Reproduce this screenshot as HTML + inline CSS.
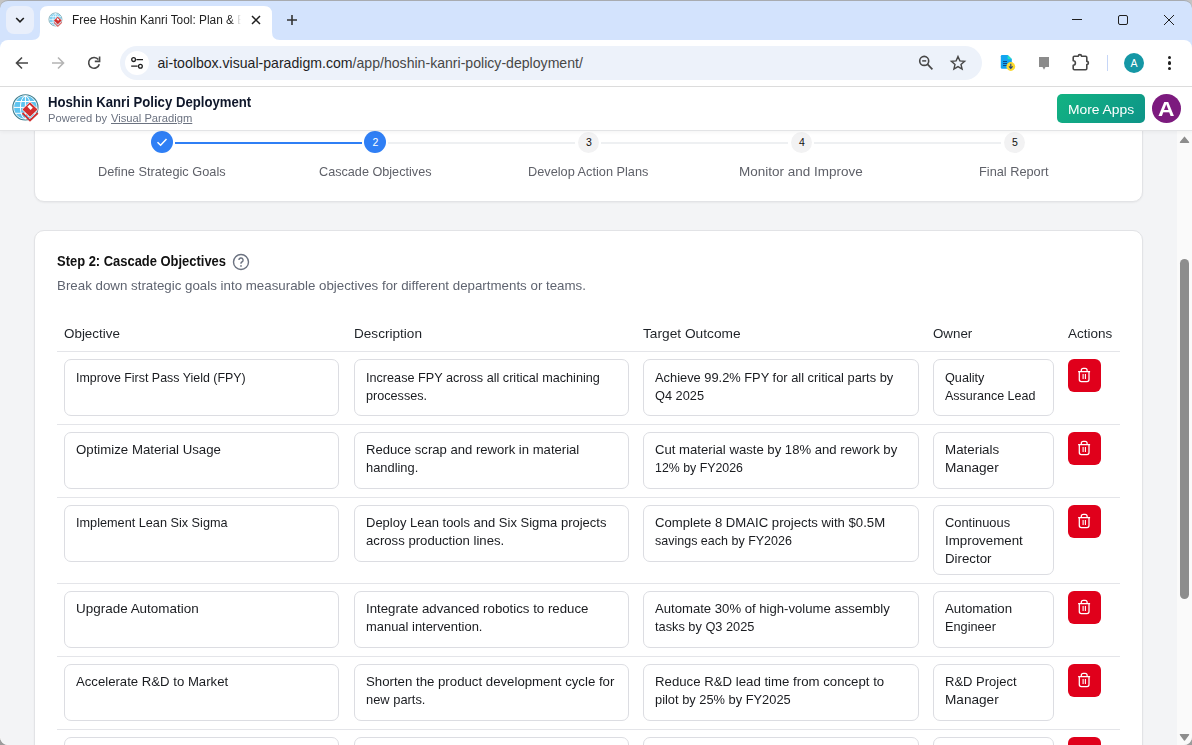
<!DOCTYPE html>
<html><head><meta charset="utf-8">
<style>
*{box-sizing:border-box;margin:0;padding:0}
html,body{width:1192px;height:745px;overflow:hidden;background:#c4c4c4;font-family:"Liberation Sans",sans-serif}
.a{position:absolute}
.t{position:absolute;white-space:pre;line-height:1}
svg{position:absolute;overflow:visible}
</style></head><body>
<div class="a" style="left:0px;top:87px;width:1177px;height:658px;background:#f3f4f6"></div>
<div class="a" style="left:34px;top:60px;width:1109px;height:142px;background:#fff;border:1px solid #e2e3e6;border-radius:10px;box-shadow:0 1px 2px rgba(0,0,0,.05)"></div>
<div class="a" style="left:34px;top:230px;width:1109px;height:600px;background:#fff;border:1px solid #e2e3e6;border-radius:10px;box-shadow:0 1px 2px rgba(0,0,0,.05)"></div>
<div class="a" style="left:175px;top:142px;width:187px;height:2px;background:#2f7ff5"></div>
<div class="a" style="left:388px;top:142px;width:187px;height:2px;background:#eef0f2"></div>
<div class="a" style="left:601px;top:142px;width:187px;height:2px;background:#eef0f2"></div>
<div class="a" style="left:814px;top:142px;width:187px;height:2px;background:#eef0f2"></div>
<div class="a" style="left:151px;top:131px;width:22px;height:22px;background:#2f7ff5;border-radius:50%"></div>
<div class="t" style="left:98.20px;top:166px;font-size:12.75px;color:#5f6169;font-weight:400;transform:scaleX(1.0003);transform-origin:0 0;">Define Strategic Goals</div>
<div class="a" style="left:364px;top:131px;width:22px;height:22px;background:#2f7ff5;border-radius:50%"></div>
<div class="t" style="left:318.75px;top:166px;font-size:12.75px;color:#5f6169;font-weight:400;transform:scaleX(0.9921);transform-origin:0 0;">Cascade Objectives</div>
<div class="a" style="left:577.5px;top:132px;width:21px;height:21px;background:#f2f2f3;border-radius:50%"></div>
<div class="t" style="left:527.80px;top:166px;font-size:12.75px;color:#5f6169;font-weight:400;transform:scaleX(0.9992);transform-origin:0 0;">Develop Action Plans</div>
<div class="a" style="left:790.5px;top:132px;width:21px;height:21px;background:#f2f2f3;border-radius:50%"></div>
<div class="t" style="left:739.15px;top:166px;font-size:12.75px;color:#5f6169;font-weight:400;transform:scaleX(1.0578);transform-origin:0 0;">Monitor and Improve</div>
<div class="a" style="left:1003.5px;top:132px;width:21px;height:21px;background:#f2f2f3;border-radius:50%"></div>
<div class="t" style="left:979.25px;top:166px;font-size:12.75px;color:#5f6169;font-weight:400;transform:scaleX(1.0007);transform-origin:0 0;">Final Report</div>
<svg style="left:156px;top:136px" width="12" height="12" viewBox="0 0 12 12"><path d="M1.5 6.2 L4.6 9.2 L10.5 3" fill="none" stroke="#fff" stroke-width="1.5"/></svg>
<div class="t" style="left:372.38px;top:137px;font-size:10.5px;color:#fff;font-weight:400;">2</div>
<div class="t" style="left:585.88px;top:137px;font-size:10.5px;color:#111;font-weight:400;">3</div>
<div class="t" style="left:798.88px;top:137px;font-size:10.5px;color:#111;font-weight:400;">4</div>
<div class="t" style="left:1011.88px;top:137px;font-size:10.5px;color:#111;font-weight:400;">5</div>
<div class="t" style="left:57.00px;top:254px;font-size:14.0px;color:#111;font-weight:700;transform:scaleX(0.9242);transform-origin:0 0;">Step 2: Cascade Objectives</div>
<svg style="left:232px;top:253px" width="18" height="18" viewBox="0 0 18 18"><circle cx="9" cy="9" r="7.5" fill="none" stroke="#6b7280" stroke-width="1.4"/><path d="M6.9 7.1 a2.1 2.1 0 1 1 3 1.9 c-.6.3-.9.7-.9 1.3v.5" fill="none" stroke="#6b7280" stroke-width="1.4"/><circle cx="9" cy="12.9" r=".85" fill="#6b7280"/></svg>
<div class="t" style="left:57.00px;top:280px;font-size:12.75px;color:#5f6470;font-weight:400;transform:scaleX(1.0444);transform-origin:0 0;">Break down strategic goals into measurable objectives for different departments or teams.</div>
<div class="t" style="left:64.00px;top:327px;font-size:13.1px;color:#1f2328;font-weight:400;transform:scaleX(1.0241);transform-origin:0 0;">Objective</div>
<div class="t" style="left:354.00px;top:327px;font-size:13.1px;color:#1f2328;font-weight:400;transform:scaleX(1.0375);transform-origin:0 0;">Description</div>
<div class="t" style="left:643.00px;top:327px;font-size:13.1px;color:#1f2328;font-weight:400;transform:scaleX(1.0473);transform-origin:0 0;">Target Outcome</div>
<div class="t" style="left:933.00px;top:327px;font-size:13.1px;color:#1f2328;font-weight:400;transform:scaleX(1.0179);transform-origin:0 0;">Owner</div>
<div class="t" style="left:1068.00px;top:327px;font-size:13.1px;color:#1f2328;font-weight:400;transform:scaleX(1.0302);transform-origin:0 0;">Actions</div>
<div class="a" style="left:57px;top:351px;width:1063px;height:1px;background:#e4e5e9"></div>
<div class="a" style="left:64px;top:359px;width:275px;height:57px;background:#fff;border:1px solid #dcdde2;border-radius:7px"></div>
<div class="t" style="left:76.00px;top:372px;font-size:12.75px;color:#1a1c20;font-weight:400;transform:scaleX(0.9734);transform-origin:0 0;">Improve First Pass Yield (FPY)</div>
<div class="a" style="left:354px;top:359px;width:275px;height:57px;background:#fff;border:1px solid #dcdde2;border-radius:7px"></div>
<div class="t" style="left:366.00px;top:372px;font-size:12.75px;color:#1a1c20;font-weight:400;transform:scaleX(0.9919);transform-origin:0 0;">Increase FPY across all critical machining</div>
<div class="t" style="left:366.00px;top:390px;font-size:12.75px;color:#1a1c20;font-weight:400;transform:scaleX(0.9900);transform-origin:0 0;">processes.</div>
<div class="a" style="left:643px;top:359px;width:276px;height:57px;background:#fff;border:1px solid #dcdde2;border-radius:7px"></div>
<div class="t" style="left:655.00px;top:372px;font-size:12.75px;color:#1a1c20;font-weight:400;transform:scaleX(1.0076);transform-origin:0 0;">Achieve 99.2% FPY for all critical parts by</div>
<div class="t" style="left:655.00px;top:390px;font-size:12.75px;color:#1a1c20;font-weight:400;transform:scaleX(1.0021);transform-origin:0 0;">Q4 2025</div>
<div class="a" style="left:933px;top:359px;width:121px;height:57px;background:#fff;border:1px solid #dcdde2;border-radius:7px"></div>
<div class="t" style="left:945.00px;top:372px;font-size:12.75px;color:#1a1c20;font-weight:400;transform:scaleX(0.9925);transform-origin:0 0;">Quality</div>
<div class="t" style="left:945.00px;top:390px;font-size:12.75px;color:#1a1c20;font-weight:400;transform:scaleX(0.9815);transform-origin:0 0;">Assurance Lead</div>
<div class="a" style="left:1068px;top:359px;width:33px;height:33px;background:#e0001b;border-radius:6px"></div>
<svg style="left:1077px;top:367px" width="15" height="16" viewBox="0 0 15 16"><path d="M1.1 4.6 H13.1 M4.3 4.4 V3.2 Q4.3 1.3 6.3 1.3 H8.1 Q10.1 1.3 10.1 3.2 V4.4 M2.3 4.8 V12.6 Q2.3 14.6 4.3 14.6 H10 Q12 14.6 12 12.6 V4.8" fill="none" stroke="#fff" stroke-width="1.25"/><path d="M6.1 7 V11.9 M8.4 7 V11.9" stroke="#fff" stroke-width="1.1"/></svg>
<div class="a" style="left:64px;top:432px;width:275px;height:57px;background:#fff;border:1px solid #dcdde2;border-radius:7px"></div>
<div class="t" style="left:76.00px;top:444px;font-size:12.75px;color:#1a1c20;font-weight:400;transform:scaleX(1.0381);transform-origin:0 0;">Optimize Material Usage</div>
<div class="a" style="left:354px;top:432px;width:275px;height:57px;background:#fff;border:1px solid #dcdde2;border-radius:7px"></div>
<div class="t" style="left:366.00px;top:444px;font-size:12.75px;color:#1a1c20;font-weight:400;transform:scaleX(1.0272);transform-origin:0 0;">Reduce scrap and rework in material</div>
<div class="t" style="left:366.00px;top:462px;font-size:12.75px;color:#1a1c20;font-weight:400;transform:scaleX(1.0100);transform-origin:0 0;">handling.</div>
<div class="a" style="left:643px;top:432px;width:276px;height:57px;background:#fff;border:1px solid #dcdde2;border-radius:7px"></div>
<div class="t" style="left:655.00px;top:444px;font-size:12.75px;color:#1a1c20;font-weight:400;transform:scaleX(1.0295);transform-origin:0 0;">Cut material waste by 18% and rework by</div>
<div class="t" style="left:655.00px;top:462px;font-size:12.75px;color:#1a1c20;font-weight:400;transform:scaleX(0.9697);transform-origin:0 0;">12% by FY2026</div>
<div class="a" style="left:933px;top:432px;width:121px;height:57px;background:#fff;border:1px solid #dcdde2;border-radius:7px"></div>
<div class="t" style="left:945.00px;top:444px;font-size:12.75px;color:#1a1c20;font-weight:400;transform:scaleX(1.0480);transform-origin:0 0;">Materials</div>
<div class="t" style="left:945.00px;top:462px;font-size:12.75px;color:#1a1c20;font-weight:400;transform:scaleX(1.0673);transform-origin:0 0;">Manager</div>
<div class="a" style="left:1068px;top:432px;width:33px;height:33px;background:#e0001b;border-radius:6px"></div>
<svg style="left:1077px;top:440px" width="15" height="16" viewBox="0 0 15 16"><path d="M1.1 4.6 H13.1 M4.3 4.4 V3.2 Q4.3 1.3 6.3 1.3 H8.1 Q10.1 1.3 10.1 3.2 V4.4 M2.3 4.8 V12.6 Q2.3 14.6 4.3 14.6 H10 Q12 14.6 12 12.6 V4.8" fill="none" stroke="#fff" stroke-width="1.25"/><path d="M6.1 7 V11.9 M8.4 7 V11.9" stroke="#fff" stroke-width="1.1"/></svg>
<div class="a" style="left:64px;top:505px;width:275px;height:57px;background:#fff;border:1px solid #dcdde2;border-radius:7px"></div>
<div class="t" style="left:76.00px;top:517px;font-size:12.75px;color:#1a1c20;font-weight:400;transform:scaleX(0.9947);transform-origin:0 0;">Implement Lean Six Sigma</div>
<div class="a" style="left:354px;top:505px;width:275px;height:57px;background:#fff;border:1px solid #dcdde2;border-radius:7px"></div>
<div class="t" style="left:366.00px;top:517px;font-size:12.75px;color:#1a1c20;font-weight:400;transform:scaleX(1.0187);transform-origin:0 0;">Deploy Lean tools and Six Sigma projects</div>
<div class="t" style="left:366.00px;top:535px;font-size:12.75px;color:#1a1c20;font-weight:400;transform:scaleX(1.0316);transform-origin:0 0;">across production lines.</div>
<div class="a" style="left:643px;top:505px;width:276px;height:57px;background:#fff;border:1px solid #dcdde2;border-radius:7px"></div>
<div class="t" style="left:655.00px;top:517px;font-size:12.75px;color:#1a1c20;font-weight:400;transform:scaleX(1.0308);transform-origin:0 0;">Complete 8 DMAIC projects with $0.5M</div>
<div class="t" style="left:655.00px;top:535px;font-size:12.75px;color:#1a1c20;font-weight:400;transform:scaleX(0.9806);transform-origin:0 0;">savings each by FY2026</div>
<div class="a" style="left:933px;top:505px;width:121px;height:70px;background:#fff;border:1px solid #dcdde2;border-radius:7px"></div>
<div class="t" style="left:945.00px;top:517px;font-size:12.75px;color:#1a1c20;font-weight:400;transform:scaleX(1.0095);transform-origin:0 0;">Continuous</div>
<div class="t" style="left:945.00px;top:535px;font-size:12.75px;color:#1a1c20;font-weight:400;transform:scaleX(1.0452);transform-origin:0 0;">Improvement</div>
<div class="t" style="left:945.00px;top:553px;font-size:12.75px;color:#1a1c20;font-weight:400;transform:scaleX(1.0409);transform-origin:0 0;">Director</div>
<div class="a" style="left:1068px;top:505px;width:33px;height:33px;background:#e0001b;border-radius:6px"></div>
<svg style="left:1077px;top:513px" width="15" height="16" viewBox="0 0 15 16"><path d="M1.1 4.6 H13.1 M4.3 4.4 V3.2 Q4.3 1.3 6.3 1.3 H8.1 Q10.1 1.3 10.1 3.2 V4.4 M2.3 4.8 V12.6 Q2.3 14.6 4.3 14.6 H10 Q12 14.6 12 12.6 V4.8" fill="none" stroke="#fff" stroke-width="1.25"/><path d="M6.1 7 V11.9 M8.4 7 V11.9" stroke="#fff" stroke-width="1.1"/></svg>
<div class="a" style="left:64px;top:591px;width:275px;height:57px;background:#fff;border:1px solid #dcdde2;border-radius:7px"></div>
<div class="t" style="left:76.00px;top:603px;font-size:12.75px;color:#1a1c20;font-weight:400;transform:scaleX(1.0557);transform-origin:0 0;">Upgrade Automation</div>
<div class="a" style="left:354px;top:591px;width:275px;height:57px;background:#fff;border:1px solid #dcdde2;border-radius:7px"></div>
<div class="t" style="left:366.00px;top:603px;font-size:12.75px;color:#1a1c20;font-weight:400;transform:scaleX(1.0390);transform-origin:0 0;">Integrate advanced robotics to reduce</div>
<div class="t" style="left:366.00px;top:621px;font-size:12.75px;color:#1a1c20;font-weight:400;transform:scaleX(1.0142);transform-origin:0 0;">manual intervention.</div>
<div class="a" style="left:643px;top:591px;width:276px;height:57px;background:#fff;border:1px solid #dcdde2;border-radius:7px"></div>
<div class="t" style="left:655.00px;top:603px;font-size:12.75px;color:#1a1c20;font-weight:400;transform:scaleX(1.0289);transform-origin:0 0;">Automate 30% of high-volume assembly</div>
<div class="t" style="left:655.00px;top:621px;font-size:12.75px;color:#1a1c20;font-weight:400;transform:scaleX(1.0020);transform-origin:0 0;">tasks by Q3 2025</div>
<div class="a" style="left:933px;top:591px;width:121px;height:57px;background:#fff;border:1px solid #dcdde2;border-radius:7px"></div>
<div class="t" style="left:945.00px;top:603px;font-size:12.75px;color:#1a1c20;font-weight:400;transform:scaleX(1.0406);transform-origin:0 0;">Automation</div>
<div class="t" style="left:945.00px;top:621px;font-size:12.75px;color:#1a1c20;font-weight:400;transform:scaleX(0.9980);transform-origin:0 0;">Engineer</div>
<div class="a" style="left:1068px;top:591px;width:33px;height:33px;background:#e0001b;border-radius:6px"></div>
<svg style="left:1077px;top:599px" width="15" height="16" viewBox="0 0 15 16"><path d="M1.1 4.6 H13.1 M4.3 4.4 V3.2 Q4.3 1.3 6.3 1.3 H8.1 Q10.1 1.3 10.1 3.2 V4.4 M2.3 4.8 V12.6 Q2.3 14.6 4.3 14.6 H10 Q12 14.6 12 12.6 V4.8" fill="none" stroke="#fff" stroke-width="1.25"/><path d="M6.1 7 V11.9 M8.4 7 V11.9" stroke="#fff" stroke-width="1.1"/></svg>
<div class="a" style="left:64px;top:664px;width:275px;height:57px;background:#fff;border:1px solid #dcdde2;border-radius:7px"></div>
<div class="t" style="left:76.00px;top:676px;font-size:12.75px;color:#1a1c20;font-weight:400;transform:scaleX(1.0320);transform-origin:0 0;">Accelerate R&amp;D to Market</div>
<div class="a" style="left:354px;top:664px;width:275px;height:57px;background:#fff;border:1px solid #dcdde2;border-radius:7px"></div>
<div class="t" style="left:366.00px;top:676px;font-size:12.75px;color:#1a1c20;font-weight:400;transform:scaleX(1.0368);transform-origin:0 0;">Shorten the product development cycle for</div>
<div class="t" style="left:366.00px;top:694px;font-size:12.75px;color:#1a1c20;font-weight:400;transform:scaleX(1.0105);transform-origin:0 0;">new parts.</div>
<div class="a" style="left:643px;top:664px;width:276px;height:57px;background:#fff;border:1px solid #dcdde2;border-radius:7px"></div>
<div class="t" style="left:655.00px;top:676px;font-size:12.75px;color:#1a1c20;font-weight:400;transform:scaleX(1.0364);transform-origin:0 0;">Reduce R&amp;D lead time from concept to</div>
<div class="t" style="left:655.00px;top:694px;font-size:12.75px;color:#1a1c20;font-weight:400;transform:scaleX(1.0075);transform-origin:0 0;">pilot by 25% by FY2025</div>
<div class="a" style="left:933px;top:664px;width:121px;height:57px;background:#fff;border:1px solid #dcdde2;border-radius:7px"></div>
<div class="t" style="left:945.00px;top:676px;font-size:12.75px;color:#1a1c20;font-weight:400;transform:scaleX(1.0203);transform-origin:0 0;">R&amp;D Project</div>
<div class="t" style="left:945.00px;top:694px;font-size:12.75px;color:#1a1c20;font-weight:400;transform:scaleX(1.0673);transform-origin:0 0;">Manager</div>
<div class="a" style="left:1068px;top:664px;width:33px;height:33px;background:#e0001b;border-radius:6px"></div>
<svg style="left:1077px;top:672px" width="15" height="16" viewBox="0 0 15 16"><path d="M1.1 4.6 H13.1 M4.3 4.4 V3.2 Q4.3 1.3 6.3 1.3 H8.1 Q10.1 1.3 10.1 3.2 V4.4 M2.3 4.8 V12.6 Q2.3 14.6 4.3 14.6 H10 Q12 14.6 12 12.6 V4.8" fill="none" stroke="#fff" stroke-width="1.25"/><path d="M6.1 7 V11.9 M8.4 7 V11.9" stroke="#fff" stroke-width="1.1"/></svg>
<div class="a" style="left:64px;top:737px;width:275px;height:57px;background:#fff;border:1px solid #dcdde2;border-radius:7px"></div>
<div class="a" style="left:354px;top:737px;width:275px;height:57px;background:#fff;border:1px solid #dcdde2;border-radius:7px"></div>
<div class="a" style="left:643px;top:737px;width:276px;height:57px;background:#fff;border:1px solid #dcdde2;border-radius:7px"></div>
<div class="a" style="left:933px;top:737px;width:121px;height:57px;background:#fff;border:1px solid #dcdde2;border-radius:7px"></div>
<div class="a" style="left:1068px;top:737px;width:33px;height:33px;background:#e0001b;border-radius:6px"></div>
<svg style="left:1077px;top:745px" width="15" height="16" viewBox="0 0 15 16"><path d="M1.1 4.6 H13.1 M4.3 4.4 V3.2 Q4.3 1.3 6.3 1.3 H8.1 Q10.1 1.3 10.1 3.2 V4.4 M2.3 4.8 V12.6 Q2.3 14.6 4.3 14.6 H10 Q12 14.6 12 12.6 V4.8" fill="none" stroke="#fff" stroke-width="1.25"/><path d="M6.1 7 V11.9 M8.4 7 V11.9" stroke="#fff" stroke-width="1.1"/></svg>
<div class="a" style="left:57px;top:424px;width:1063px;height:1px;background:#e4e5e9"></div>
<div class="a" style="left:57px;top:497px;width:1063px;height:1px;background:#e4e5e9"></div>
<div class="a" style="left:57px;top:583px;width:1063px;height:1px;background:#e4e5e9"></div>
<div class="a" style="left:57px;top:656px;width:1063px;height:1px;background:#e4e5e9"></div>
<div class="a" style="left:57px;top:729px;width:1063px;height:1px;background:#e4e5e9"></div>
<div class="a" style="left:1177px;top:130px;width:15px;height:615px;background:#fafafa"></div>
<div class="a" style="left:1180px;top:259px;width:9px;height:340px;background:#8d8d8d;border-radius:5px"></div>
<svg style="left:1179px;top:135px" width="11" height="9" viewBox="0 0 11 9"><path d="M5.5 2.3 L9.6 7.3 H1.4 Z" fill="#8d8d8d" stroke="#8d8d8d" stroke-width="1.3" stroke-linejoin="round"/></svg>
<svg style="left:1179px;top:732px" width="11" height="9" viewBox="0 0 11 9"><path d="M1.4 2.6 H9.6 L5.5 8 Z" fill="#8d8d8d" stroke="#8d8d8d" stroke-width="1.3" stroke-linejoin="round"/></svg>
<div class="a" style="left:0px;top:87px;width:1192px;height:43px;background:#fff;box-shadow:0 1px 0 #e3e4e6,0 2px 4px rgba(0,0,0,.05)"></div>
<svg style="left:11px;top:93px" width="29" height="29" viewBox="0 0 29 29">
<circle cx="14.4" cy="14.4" r="12.6" fill="#fff" stroke="#3f7f8f" stroke-width="1.1"/>
<circle cx="14.4" cy="14.4" r="11.3" fill="#5ec4f0"/>
<g stroke="#fff" stroke-width="1" fill="none">
<ellipse cx="14.4" cy="14.4" rx="5" ry="11.3"/>
<path d="M14.4 3 V26 M3 14.4 H26 M4.5 8.5 H24.5 M4.5 20.3 H24.5"/>
</g>
<path d="M19 8.8 L27 16.5 L19 24.2 L11 16.5 Z" fill="#d32f2f" stroke="#fff" stroke-width="0.8"/>
<path d="M18.6 11.6 L21.8 14.8 L19.6 17 L16.4 13.8 Z" fill="#fff"/>
<path d="M11.5 20 L19 27.6 L26.8 20" fill="none" stroke="#d32f2f" stroke-width="1.8"/>
</svg>
<div class="t" style="left:48.00px;top:95px;font-size:14.0px;color:#0f172a;font-weight:700;transform:scaleX(0.9395);transform-origin:0 0;">Hoshin Kanri Policy Deployment</div>
<div class="t" style="left:48.00px;top:113px;font-size:11.1px;color:#6b7280;font-weight:400;transform:scaleX(1.0086);transform-origin:0 0;">Powered by</div>
<div class="t" style="left:111.00px;top:113px;font-size:11.1px;color:#6b7280;font-weight:400;transform:scaleX(1.0090);transform-origin:0 0;text-decoration:underline">Visual Paradigm</div>
<div class="a" style="left:1057px;top:94px;width:88px;height:29px;background:linear-gradient(135deg,#12b382,#0e9488);border-radius:5px"></div>
<div class="t" style="left:1067.50px;top:104px;font-size:12.75px;color:#fff;font-weight:400;transform:scaleX(1.0850);transform-origin:0 0;">More Apps</div>
<div class="a" style="left:1152px;top:94px;width:29px;height:29px;background:#7c1a7e;border-radius:50%"></div>
<div class="t" style="left:1157.95px;top:100px;font-size:19.5px;color:#fff;font-weight:700;transform:scaleX(1.1707);transform-origin:0 0;">A</div>
<div class="a" style="left:0;top:0;width:1192px;height:48px;background:#d3e3fd;border-radius:8px 8px 0 0;border-top:1px solid #a8abb0"></div>
<div class="a" style="left:6px;top:6px;width:28px;height:28px;background:#e9effb;border-radius:8px"></div>
<svg style="left:14px;top:15px" width="12" height="10" viewBox="0 0 12 10"><path d="M2.2 3 L6 6.8 L9.8 3" fill="none" stroke="#1f1f1f" stroke-width="1.6"/></svg>
<svg style="left:32px;top:6px" width="248" height="34" viewBox="0 0 248 34"><path d="M0 34 Q8 34 8 26 V8 Q8 0 16 0 H232 Q240 0 240 8 V26 Q240 34 248 34 Z" fill="#fff"/></svg>
<svg style="left:48px;top:12px" width="15" height="15" viewBox="0 0 29 29">
<circle cx="14.4" cy="14.4" r="12.6" fill="#fff" stroke="#5d97a6" stroke-width="1.4"/>
<circle cx="14.4" cy="14.4" r="11.3" fill="#7fd0f2"/>
<g stroke="#fff" stroke-width="1.2" fill="none">
<ellipse cx="14.4" cy="14.4" rx="5" ry="11.3"/>
<path d="M14.4 3 V26 M3 14.4 H26 M4.5 8.5 H24.5 M4.5 20.3 H24.5"/>
</g>
<path d="M19 8.8 L27 16.5 L19 24.2 L11 16.5 Z" fill="#d32f2f" stroke="#fff" stroke-width="0.8"/>
<path d="M18.6 11.6 L21.8 14.8 L19.6 17 L16.4 13.8 Z" fill="#fff"/>
<path d="M11.5 20 L19 27.6 L26.8 20" fill="none" stroke="#e06060" stroke-width="2"/>
</svg>
<div class="t" style="left:71.60px;top:14px;font-size:12.5px;color:#1f1f1f;font-weight:400;transform:scaleX(0.949);transform-origin:0 0;width:185px;overflow:hidden;-webkit-mask-image:linear-gradient(90deg,#000 167px,transparent 178px)">Free Hoshin Kanri Tool: Plan &amp; E</div>
<svg style="left:251px;top:15px" width="10" height="10" viewBox="0 0 10 10"><path d="M1 1 L9 9 M9 1 L1 9" stroke="#1f1f1f" stroke-width="1.5"/></svg>
<svg style="left:286px;top:14px" width="12" height="12" viewBox="0 0 12 12"><path d="M6 1 V11 M1 6 H11" stroke="#333" stroke-width="1.6"/></svg>
<div class="a" style="left:1072px;top:19px;width:10px;height:1px;background:#1f1f1f"></div>
<svg style="left:1117px;top:14px" width="12" height="12" viewBox="0 0 12 12"><rect x="1.5" y="1.5" width="9" height="9" rx="1.5" fill="none" stroke="#1f1f1f" stroke-width="1"/></svg>
<svg style="left:1163px;top:14px" width="12" height="12" viewBox="0 0 12 12"><path d="M1 1 L11 11 M11 1 L1 11" stroke="#1f1f1f" stroke-width="1"/></svg>
<div class="a" style="left:0;top:40px;width:1192px;height:46px;background:#fff;border-radius:8px 8px 0 0"></div>
<div class="a" style="left:0px;top:86px;width:1192px;height:1px;background:#dcdcdc"></div>
<svg style="left:14px;top:55px" width="16" height="16" viewBox="0 0 16 16"><path d="M14 8 H2.5 M8 2.5 L2.5 8 L8 13.5" fill="none" stroke="#474747" stroke-width="1.6"/></svg>
<svg style="left:50px;top:55px" width="16" height="16" viewBox="0 0 16 16"><path d="M2 8 H13.5 M8 2.5 L13.5 8 L8 13.5" fill="none" stroke="#b4b4b4" stroke-width="1.6"/></svg>
<svg style="left:86px;top:55px" width="16" height="16" viewBox="0 0 16 16"><path d="M12.4 4.6 A5.4 5.4 0 1 0 13.3 9.2" fill="none" stroke="#474747" stroke-width="1.6"/><path d="M8.8 6.4 H13.6 V1.6" fill="none" stroke="#474747" stroke-width="1.6"/></svg>
<div class="a" style="left:120px;top:46px;width:862px;height:34px;background:#edf2fa;border-radius:17px"></div>
<div class="a" style="left:125px;top:51px;width:24px;height:24px;background:#fff;border-radius:50%"></div>
<svg style="left:129px;top:55px" width="16" height="16" viewBox="0 0 16 16"><circle cx="4.6" cy="4.6" r="1.9" fill="none" stroke="#1f1f1f" stroke-width="1.3"/><circle cx="11.4" cy="11.2" r="1.9" fill="none" stroke="#1f1f1f" stroke-width="1.3"/><path d="M7.4 4.6 H14 M2.2 11.2 H8.6" stroke="#1f1f1f" stroke-width="1.3"/></svg>
<div class="t" style="left:157.5px;top:56px;font-size:14.1px;color:#1f1f1f">ai-toolbox.visual-paradigm.com<span style="color:#474747">/app/hoshin-kanri-policy-deployment/</span></div>
<svg style="left:916px;top:53px" width="18" height="18" viewBox="0 0 18 18"><circle cx="8.2" cy="7.9" r="4.5" fill="none" stroke="#474747" stroke-width="1.6"/><path d="M6.2 7.9 H10.2" stroke="#474747" stroke-width="1.5"/><path d="M11.4 11.2 L16.4 16.3" stroke="#474747" stroke-width="1.7"/></svg>
<svg style="left:950px;top:54.6px" width="16" height="16" viewBox="0 0 16 16"><path d="M8 1.6 L9.9 5.9 L14.6 6.3 L11 9.4 L12.1 14 L8 11.6 L3.9 14 L5 9.4 L1.4 6.3 L6.1 5.9 Z" fill="none" stroke="#474747" stroke-width="1.4" stroke-linejoin="miter"/></svg>
<svg style="left:999px;top:54px" width="18" height="18" viewBox="0 0 18 18">
<path d="M3 1 H8.8 L12.8 5 V13.5 Q12.8 14.7 11.6 14.7 H3 Q1.8 14.7 1.8 13.5 V2.2 Q1.8 1 3 1 Z" fill="#12a4f0"/><path d="M8.6 1 L12.8 5.2 H8.6 Z" fill="#22e3c0"/>
<path d="M4 7.5h4M4 9.5h4M4 11.5h4" stroke="#0a4a8a" stroke-width="1"/>
<circle cx="11.8" cy="12.5" r="4.4" fill="#fbd92e"/><path d="M11.8 9.8v4.6M10 12.4l1.8 2 1.8-2" fill="none" stroke="#21407a" stroke-width="1.1"/>
</svg>
<svg style="left:1038px;top:56px" width="12" height="14" viewBox="0 0 12 14"><path d="M1 1 H11 V11 H7.5 L6 13.7 L4.5 11 H1 Z" fill="#8b8b8b"/></svg>
<svg style="left:1072px;top:53px" width="18" height="18" viewBox="0 0 18 18"><path d="M2.4 3.2 H6.3 A1.6 1.6 0 0 1 9.5 3.2 H13.6 Q14.8 3.2 14.8 4.4 V8.4 A1.6 1.6 0 0 1 14.8 11.6 V15.5 Q14.8 16.7 13.6 16.7 H2.4 Q1.2 16.7 1.2 15.5 V12.2 A2.2 2.2 0 0 0 1.2 7.8 V4.4 Q1.2 3.2 2.4 3.2 Z" fill="none" stroke="#474747" stroke-width="1.6" stroke-linejoin="round"/></svg>
<div class="a" style="left:1107px;top:55px;width:1px;height:16px;background:#c6d6f7"></div>
<div class="a" style="left:1124px;top:53px;width:20px;height:20px;background:#1597a5;border-radius:50%"></div>
<div class="t" style="left:1130.49px;top:58px;font-size:10.5px;color:#fff;font-weight:400;">A</div>
<div class="a" style="left:1168.1px;top:55.9px;width:3.4px;height:3.4px;background:#1f1f1f;border-radius:50%"></div>
<div class="a" style="left:1168.1px;top:61.2px;width:3.4px;height:3.4px;background:#1f1f1f;border-radius:50%"></div>
<div class="a" style="left:1168.1px;top:66.5px;width:3.4px;height:3.4px;background:#1f1f1f;border-radius:50%"></div>
<svg style="left:0;top:737px" width="8" height="8" viewBox="0 0 8 8"><path d="M0 0 A8 8 0 0 0 8 8 H0 Z" fill="#9c9c9c"/><path d="M0.5 0 A7.5 7.5 0 0 0 8 7.5" fill="none" stroke="#f7f7f7" stroke-width="0.8"/></svg>
<svg style="left:1184px;top:737px" width="8" height="8" viewBox="0 0 8 8"><path d="M8 0 A8 8 0 0 1 0 8 H8 Z" fill="#9c9c9c"/><path d="M7.5 0 A7.5 7.5 0 0 1 0 7.5" fill="none" stroke="#f7f7f7" stroke-width="0.8"/></svg>
</body></html>
